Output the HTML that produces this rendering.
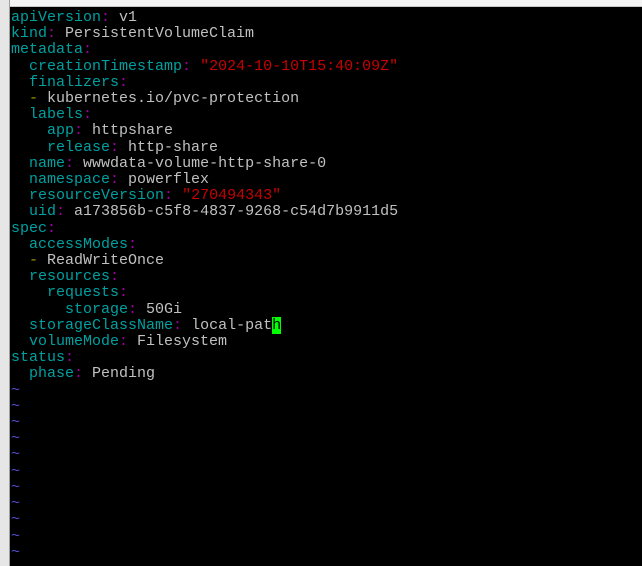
<!DOCTYPE html>
<html><head><meta charset="utf-8"><style>
html,body{margin:0;padding:0;width:642px;height:566px;overflow:hidden;background:#f0f0f0;position:relative;}
#top{position:absolute;left:0;top:0;width:642px;height:6px;background:#f4f4f4;border-bottom:1px solid #c8c8c8;}
#left{position:absolute;left:0;top:0;width:9px;height:566px;background:#e6e6e6;border-right:1px solid #a0a0a0;}
#term{position:absolute;left:10px;top:7px;width:632px;height:559px;background:#000;overflow:hidden;}
pre{margin:0;position:absolute;left:1px;top:3px;font-family:"Liberation Mono",monospace;font-size:15px;line-height:16.2px;color:#c0c0c0;}
.k{color:#00a0a0}.c{color:#a000a0}.s{color:#c80000}.d{color:#a0a000}.t{color:#5050d0}
.cur{background:#00ff00;color:#000}
</style></head><body>
<div id="top"></div><div id="left"></div>
<div id="term"><pre><span class="k">apiVersion</span><span class="c">:</span> v1
<span class="k">kind</span><span class="c">:</span> PersistentVolumeClaim
<span class="k">metadata</span><span class="c">:</span>
  <span class="k">creationTimestamp</span><span class="c">:</span> <span class="s">"2024-10-10T15:40:09Z"</span>
  <span class="k">finalizers</span><span class="c">:</span>
  <span class="d">-</span> kubernetes.io/pvc-protection
  <span class="k">labels</span><span class="c">:</span>
    <span class="k">app</span><span class="c">:</span> httpshare
    <span class="k">release</span><span class="c">:</span> http-share
  <span class="k">name</span><span class="c">:</span> wwwdata-volume-http-share-0
  <span class="k">namespace</span><span class="c">:</span> powerflex
  <span class="k">resourceVersion</span><span class="c">:</span> <span class="s">"270494343"</span>
  <span class="k">uid</span><span class="c">:</span> a173856b-c5f8-4837-9268-c54d7b9911d5
<span class="k">spec</span><span class="c">:</span>
  <span class="k">accessModes</span><span class="c">:</span>
  <span class="d">-</span> ReadWriteOnce
  <span class="k">resources</span><span class="c">:</span>
    <span class="k">requests</span><span class="c">:</span>
      <span class="k">storage</span><span class="c">:</span> 50Gi
  <span class="k">storageClassName</span><span class="c">:</span> local-pat<span class="cur">h</span>
  <span class="k">volumeMode</span><span class="c">:</span> Filesystem
<span class="k">status</span><span class="c">:</span>
  <span class="k">phase</span><span class="c">:</span> Pending
<span class="t">~
~
~
~
~
~
~
~
~
~
~
~</span></pre></div>
</body></html>
